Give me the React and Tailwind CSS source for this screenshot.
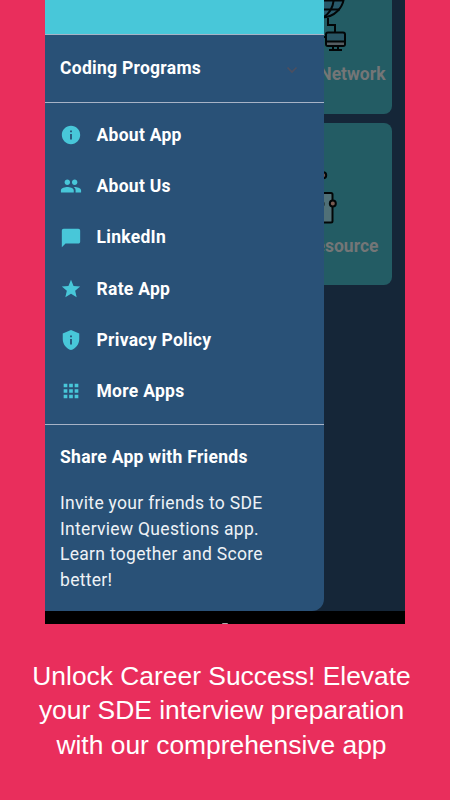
import { MdApps, MdChatBubble, MdInfo, MdPeople, MdPrivacyTip, MdStar } from 'react-icons/md'

const MENU = [
  { label: 'About App', Icon: MdInfo },
  { label: 'About Us', Icon: MdPeople },
  { label: 'LinkedIn', Icon: MdChatBubble },
  { label: 'Rate App', Icon: MdStar },
  { label: 'Privacy Policy', Icon: MdPrivacyTip },
  { label: 'More Apps', Icon: MdApps },
]

// Globe wired to a desktop monitor
function NetworkIcon() {
  return (
    <svg className="w-[72px] h-[72px]" viewBox="0 0 72 72" fill="none" stroke="#020607" strokeWidth="2">
      <circle cx="46" cy="16.500" r="22" fill="#28596a" />
      <path d="M27 30.500h37M27 21.500h41M47 38.500c7-4 11-11 11-22" />
      <path d="M52 39v7h7v7M44 58h6" />
      <rect x="50" y="53.500" width="19" height="13.500" rx="2" fill="#285563" />
      <path d="M51 62.500h17v3.500h-17z" fill="#555d62" stroke="none" />
      <path d="M50 62.500h19" />
      <path d="M57 67v4h5v-4M53 71h13" />
    </svg>
  )
}

// Right part of a robot head with its antenna
function RobotIcon() {
  return (
    <svg className="w-[60px] h-[60px]" viewBox="0 0 60 60" fill="none" stroke="#020607" strokeWidth="2">
      <circle cx="42.200" cy="8.200" r="3" fill="#71544c" />
      <rect x="13" y="26" width="38.500" height="29.500" rx="1.500" fill="#507077" />
      <circle cx="39.500" cy="37" r="3" />
      <path d="M36 48.500h7" />
      <circle cx="51.800" cy="36.500" r="3" fill="#795b52" />
    </svg>
  )
}

function Drawer() {
  return (
    <aside className="absolute left-0 top-0 w-[278.700px] h-[611.400px] rounded-br-[12px] overflow-hidden bg-[#295177] text-white">
      <div className="h-[34px] bg-[#48c7d9]" />

      <div className="h-[69px] border-y border-[#a7b3c7] pl-[15px] pr-[24px] flex items-center justify-between">
        <h2 className="text-[17.500px] font-bold tracking-[0.280px]">Coding Programs</h2>
        <svg className="w-[16px] h-[16px] mt-[2px]" viewBox="0 0 16 16" fill="none" stroke="#4c4f60" strokeWidth="1.700">
          <path d="M3.500 5.500L8 10l4.500-4.500" />
        </svg>
      </div>

      <nav className="pt-[6.400px] h-[321px]">
        {MENU.map(({ label, Icon }) => (
          <div key={label} className="h-[51.250px] pl-[14.500px] flex items-center gap-[15px]">
            <Icon className="w-[22px] h-[22px] text-[#48c7d9]" />
            <span className="text-[17.500px] font-bold tracking-[0.280px]">{label}</span>
          </div>
        ))}
      </nav>

      <section className="border-t border-[#a7b3c7] pl-[15px] pt-[19px]">
        <h2 className="text-[17.500px] leading-[26px] font-bold tracking-[0.280px]">Share App with Friends</h2>
        <p className="mt-[20.900px] w-[230px] text-[17.500px] leading-[25.700px] tracking-[0.300px] text-[#eef2f6]">
          Invite your friends to SDE<br />
          Interview Questions app.<br />
          Learn together and Score<br />
          better!
        </p>
      </section>
    </aside>
  )
}

export default function App() {
  return (
    <div className="w-[450px] h-[800px] overflow-hidden bg-[#e92e5c] font-['Roboto',sans-serif]">
      <div className="relative mx-auto w-[360px] h-[624.400px] overflow-hidden bg-[#152638] flex flex-col">
        {/* Topic cards, dimmed under the drawer */}
        <div className="flex-1 flex flex-col items-end pr-[13px] text-[17.500px] font-bold text-[#747677]">
          <div className="w-[162px] h-[113.500px] rounded-b-[8px] bg-[#235c64] flex flex-col items-end justify-end pr-[6.500px] pb-[26.400px]">
            <div className="mr-[38px] mb-[10.600px]"><NetworkIcon /></div>
            <span className="leading-[26px]">Network</span>
          </div>
          <div className="mt-[9.500px] w-[162px] h-[162px] rounded-[8px] bg-[#235c64] flex flex-col items-end justify-end pr-[13.500px] pb-[26.400px]">
            <div className="mr-[37.500px] mb-[5.600px]"><RobotIcon /></div>
            <span className="leading-[26px]">Resource</span>
          </div>
        </div>
        <Drawer />
        <div className="h-[13px] bg-black flex items-end justify-center">
          <div className="w-[6px] h-[1px] rounded-t-full bg-[#a8a8a8]" />
        </div>
      </div>

      <p className="mt-[34.600px] pr-[7px] text-center font-['Liberation_Sans',Arial,sans-serif] text-[26.400px] leading-[34.500px] text-white">
        Unlock Career Success! Elevate<br />
        your SDE interview preparation<br />
        with our comprehensive app
      </p>
    </div>
  )
}
